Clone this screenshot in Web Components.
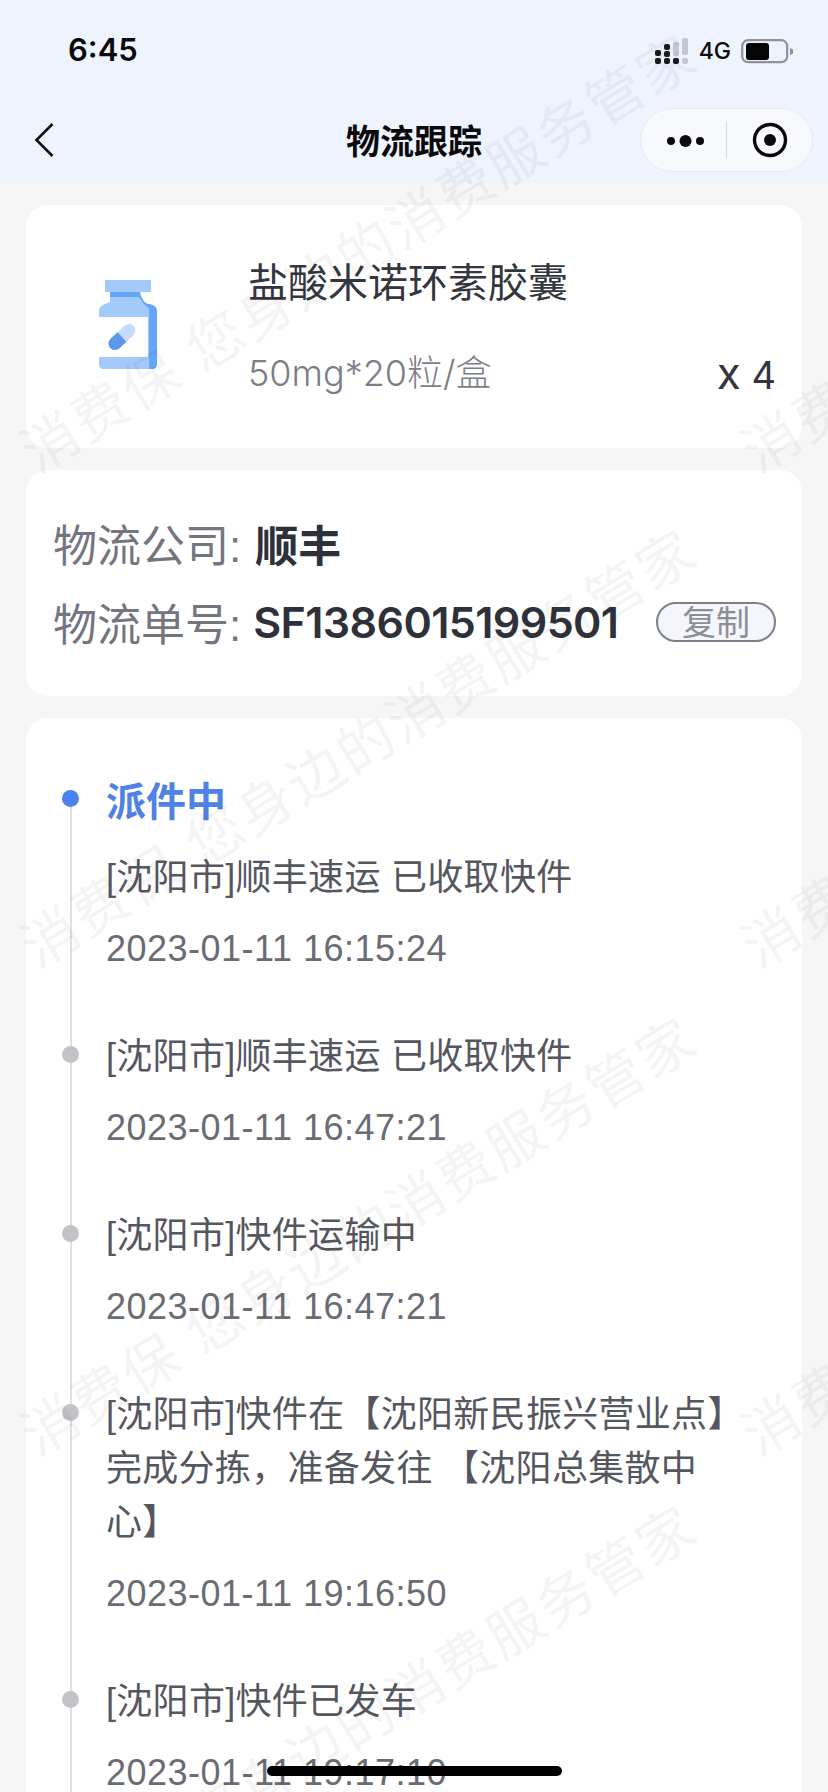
<!DOCTYPE html>
<html lang="zh">
<head>
<meta charset="utf-8">
<title>物流跟踪</title>
<style>
  html, body { margin: 0; height: 1792px; overflow: hidden; }
  body {
    background: #f6f6f6;
    font-family: "Liberation Sans", "Noto Sans CJK SC", sans-serif;
    position: relative;
  }
</style>
</head>
<body>
<top-header title="物流跟踪"></top-header>
<page-content>
  <drug-card name="盐酸米诺环素胶囊" spec="50mg*20粒/盒" count="4"></drug-card>
  <logistics-card company="顺丰" number="SF1386015199501"></logistics-card>
  <track-list>
    <track-item first heading="派件中" text="[沈阳市]顺丰速运 已收取快件" time="2023-01-11 16:15:24"></track-item>
    <track-item text="[沈阳市]顺丰速运 已收取快件" time="2023-01-11 16:47:21"></track-item>
    <track-item text="[沈阳市]快件运输中" time="2023-01-11 16:47:21"></track-item>
    <track-item text="[沈阳市]快件在【沈阳新民振兴营业点】完成分拣，准备发往 【沈阳总集散中心】" time="2023-01-11 19:16:50"></track-item>
    <track-item text="[沈阳市]快件已发车" time="2023-01-11 19:17:10"></track-item>
  </track-list>
</page-content>
<water-mark></water-mark>
<home-indicator></home-indicator>

<script>
class TopHeader extends HTMLElement {
  connectedCallback() {
    const title = this.getAttribute("title") || "";
    this.removeAttribute("title");
    this.attachShadow({ mode: "open" }).innerHTML = `
      <style>
        :host { display: block; height: 183px; background: #eef3fe; color: #0b0b0d; }
        .status { height: 88px; display: flex; align-items: flex-end; padding: 0 34px 24px 68px; box-sizing: border-box; }
        .time { font: 600 31px/28px Inter, "Liberation Sans", sans-serif; flex: 1; }
        .net { font: 500 23px/26px Inter, "Liberation Sans", sans-serif; margin: 0 10px; }
        .nav { height: 95px; display: grid; grid-template-columns: 1fr auto 1fr; align-items: center; padding: 8px 15px 0; box-sizing: border-box; }
        h1 { margin: 0; font: 700 34px/44px "Noto Sans CJK SC", sans-serif; }
        .back { justify-self: start; display: block; margin-left: 19px; }
        .capsule {
          justify-self: end; width: 173px; height: 64px; box-sizing: border-box;
          display: grid; grid-template-columns: 1fr 1px 1fr; align-items: center; justify-items: center;
          border: 1px solid #e7eaf2; border-radius: 32px; background: #f8f9fd;
        }
        .capsule i { display: block; width: 1px; height: 38px; background: #d6d8de; }
        svg { display: block; }
      </style>
      <div class="status">
        <span class="time">6:45</span>
        <svg width="34" height="26" viewBox="0 0 34 26">
          <g fill="#1a1a1c">
            <rect x="0" y="12" width="6" height="6" rx="2"/><rect x="0" y="20" width="6" height="6" rx="2"/>
            <rect x="9" y="6" width="6" height="6" rx="2"/><rect x="9" y="13" width="6" height="6" rx="2"/><rect x="9" y="20" width="6" height="6" rx="2"/>
            <rect x="18" y="20" width="6" height="6" rx="2"/>
          </g>
          <g fill="#c3c7d0">
            <rect x="18" y="4" width="6" height="14" rx="2"/>
            <rect x="27" y="0" width="6" height="17" rx="2"/><rect x="27" y="20" width="6" height="6" rx="2"/>
          </g>
        </svg>
        <span class="net">4G</span>
        <svg width="53" height="26" viewBox="0 0 53 26">
          <rect x="1.2" y="2.2" width="45" height="22" rx="6" fill="none" stroke="#8e929b" stroke-width="2.2"/>
          <rect x="5" y="5" width="23" height="17" rx="3" fill="#050506"/>
          <path d="M49 10l3 1.5v4l-3 1.5z" fill="#8e929b"/>
        </svg>
      </div>
      <div class="nav">
        <svg class="back" width="20" height="36" viewBox="0 0 20 36"><path d="M18.5 2L2.5 18l16 16" fill="none" stroke="#111" stroke-width="2.6"/></svg>
        <h1>${title}</h1>
        <div class="capsule">
          <svg width="40" height="16" viewBox="0 0 40 16" style="margin:2px 0 0 4px">
            <circle cx="5" cy="8" r="4" fill="#0b0b0d"/><circle cx="19.500" cy="8" r="6" fill="#0b0b0d"/><circle cx="34" cy="8" r="4" fill="#0b0b0d"/>
          </svg>
          <i></i>
          <svg width="36" height="36" viewBox="0 0 36 36">
            <circle cx="18" cy="18" r="15.500" fill="none" stroke="#0b0b0d" stroke-width="3.400"/>
            <circle cx="18" cy="18" r="6" fill="#0b0b0d"/>
          </svg>
        </div>
      </div>`;
  }
}

class PageContent extends HTMLElement {
  constructor() {
    super();
    this.attachShadow({ mode: "open" }).innerHTML = `
      <style>
        :host { display: flex; flex-direction: column; gap: 22px; padding: 22px 26px 0; }
      </style>
      <slot></slot>`;
  }
}

class DrugCard extends HTMLElement {
  connectedCallback() {
    const name = this.getAttribute("name");
    const spec = this.getAttribute("spec");
    const count = this.getAttribute("count");
    this.attachShadow({ mode: "open" }).innerHTML = `
      <style>
        :host { display: grid; grid-template-columns: 222px 1fr auto; height: 243px; background: #fff; border-radius: 22px; box-sizing: border-box; padding: 0 26px 0 0; }
        .pic { padding: 75px 0 0 73px; }
        .info { padding-top: 56px; }
        .name { line-height: 44px; color: #33363f; font-size: 40px; }
        .spec { font: 300 36px/44px Inter, "Noto Sans CJK SC", sans-serif; color: #7c7e87; margin-top: 46px; }
        .count { align-self: end; margin-bottom: 51px; font: 400 38px/44px Inter, "Liberation Sans", sans-serif; color: #33363f; white-space: pre; }
        .count span { font-size: 44px; }
        svg { display: block; }
      </style>
      <div class="pic">
        <svg width="58" height="90" viewBox="0 0 58 90">
          <path d="M11 12h30v8l9 9v60H5c-3 0-5-2-5-5V31c0-3 2-5 4-6l7-3z" fill="#a3caFB"/>
          <path d="M11 12h30c1 5 3 9 6 11 4 2 11 1 11 8v53c0 3-2 5-5 5h-3V29c-3-3-8-7-10-12H11z" fill="#64a6f8"/>
          <rect x="6" y="0" width="46" height="12" fill="#a3cafb"/>
          <rect x="0" y="37" width="49" height="40" fill="#fff"/>
          <g transform="rotate(-43 23 57)">
            <rect x="7" y="50.500" width="32" height="13" rx="6.500" fill="#c4dcfc"/>
            <path d="M23 50.500h-9.500a6.500 6.500 0 0 0 0 13H23z" fill="#5a98ec"/>
          </g>
        </svg>
      </div>
      <div class="info">
        <div class="name">${name}</div>
        <div class="spec">${spec}</div>
      </div>
      <div class="count"><span>x</span> ${count}</div>`;
  }
}

class CopyButton extends HTMLElement {
  constructor() {
    super();
    this.attachShadow({ mode: "open" }).innerHTML = `
      <style>
        :host { display: inline-flex; align-items: center; justify-content: center; width: 120px; height: 40px; box-sizing: border-box; padding-top: 3px; border: 2px solid #7b808d; border-radius: 20px; background: #f5f6fb; color: #8b8e97; font-size: 34px; line-height: 35px; }
      </style>
      <slot></slot>`;
  }
}

class LogisticsCard extends HTMLElement {
  connectedCallback() {
    this.attachShadow({ mode: "open" }).innerHTML = `
      <style>
        :host { display: flex; flex-direction: column; gap: 25px; height: 226px; background: #fff; border-radius: 22px; box-sizing: border-box; padding: 46px 26px 0 27px; }
        .row { display: flex; align-items: center; height: 54px; font-size: 44px; color: #74767f; white-space: nowrap; }
        .val { margin-left: 14px; color: #2f313a; font-weight: 700; font-size: 43px; }
        .num { margin-left: 12px; font: 600 43px/54px Inter, "Liberation Sans", sans-serif; letter-spacing: -.6px; }
        copy-button { margin-left: auto; }
      </style>
      <div class="row">物流公司: <span class="val">${this.getAttribute("company")}</span></div>
      <div class="row">物流单号: <span class="val num">${this.getAttribute("number")}</span><copy-button>复制</copy-button></div>`;
  }
}

class TrackList extends HTMLElement {
  constructor() {
    super();
    this.attachShadow({ mode: "open" }).innerHTML = `
      <style>
        :host { display: block; background: #fff; border-radius: 22px; padding: 54px 60px 0 36px; min-height: 1200px; }
      </style>
      <slot></slot>`;
  }
}

class TrackItem extends HTMLElement {
  connectedCallback() {
    const heading = this.getAttribute("heading");
    this.attachShadow({ mode: "open" }).innerHTML = `
      <style>
        :host { display: grid; grid-template-columns: 17px 1fr; column-gap: 27px; }
        .rail { background: linear-gradient(#e1e1e3, #e1e1e3) center / 2px 100% no-repeat; }
        :host([first]) .rail { background-position: center bottom; background-size: 2px calc(100% - 28px); }
        .dot { display: block; width: 17px; height: 17px; border-radius: 50%; background: #c2c3c6; margin-top: 18px; }
        :host([first]) .dot { background: #4a80f0; }
        .body { padding: 2px 0 52px; font-size: 36px; line-height: 54px; color: #55575f; letter-spacing: .3px; }
        .heading { font-size: 40px; font-weight: 700; color: #4f82e6; margin: 1px 0 22px; letter-spacing: 0; }
        .time { margin-top: 17px; color: #6a6c74; letter-spacing: .5px; }
      </style>
      <div class="rail"><span class="dot"></span></div>
      <div class="body">
        ${heading ? `<div class="heading">${heading}</div>` : ""}
        <div>${this.getAttribute("text")}</div>
        <div class="time">${this.getAttribute("time")}</div>
      </div>`;
  }
}

// overlay, sits above everything like the app's watermark canvas
class WaterMark extends HTMLElement {
  connectedCallback() {
    const root = this.attachShadow({ mode: "open" });
    let html = `
      <style>
        :host { position: absolute; inset: 0; overflow: hidden; pointer-events: none; display: block; }
        span {
          position: absolute; white-space: nowrap; transform-origin: 0 50%; transform: rotate(-31.5deg);
          font-size: 56px; line-height: 60px; letter-spacing: 2.6px; color: rgba(40, 40, 60, .05);
        }
      </style>`;
    [428, 923, 1411, 1899].forEach((top) => {
      [27, 748].forEach((left) => {
        html += `<span style="left:${left}px;top:${top}px">消费保 您身边的消费服务管家</span>`;
      });
    });
    root.innerHTML = html;
  }
}

class HomeIndicator extends HTMLElement {
  constructor() {
    super();
    this.attachShadow({ mode: "open" }).innerHTML = `
      <style>
        :host { position: absolute; left: 267px; top: 1766px; width: 295px; height: 10px; border-radius: 5px; background: #000; display: block; }
      </style>`;
  }
}

customElements.define("top-header", TopHeader);
customElements.define("page-content", PageContent);
customElements.define("drug-card", DrugCard);
customElements.define("copy-button", CopyButton);
customElements.define("logistics-card", LogisticsCard);
customElements.define("track-list", TrackList);
customElements.define("track-item", TrackItem);
customElements.define("water-mark", WaterMark);
customElements.define("home-indicator", HomeIndicator);
</script>
</body>
</html>
